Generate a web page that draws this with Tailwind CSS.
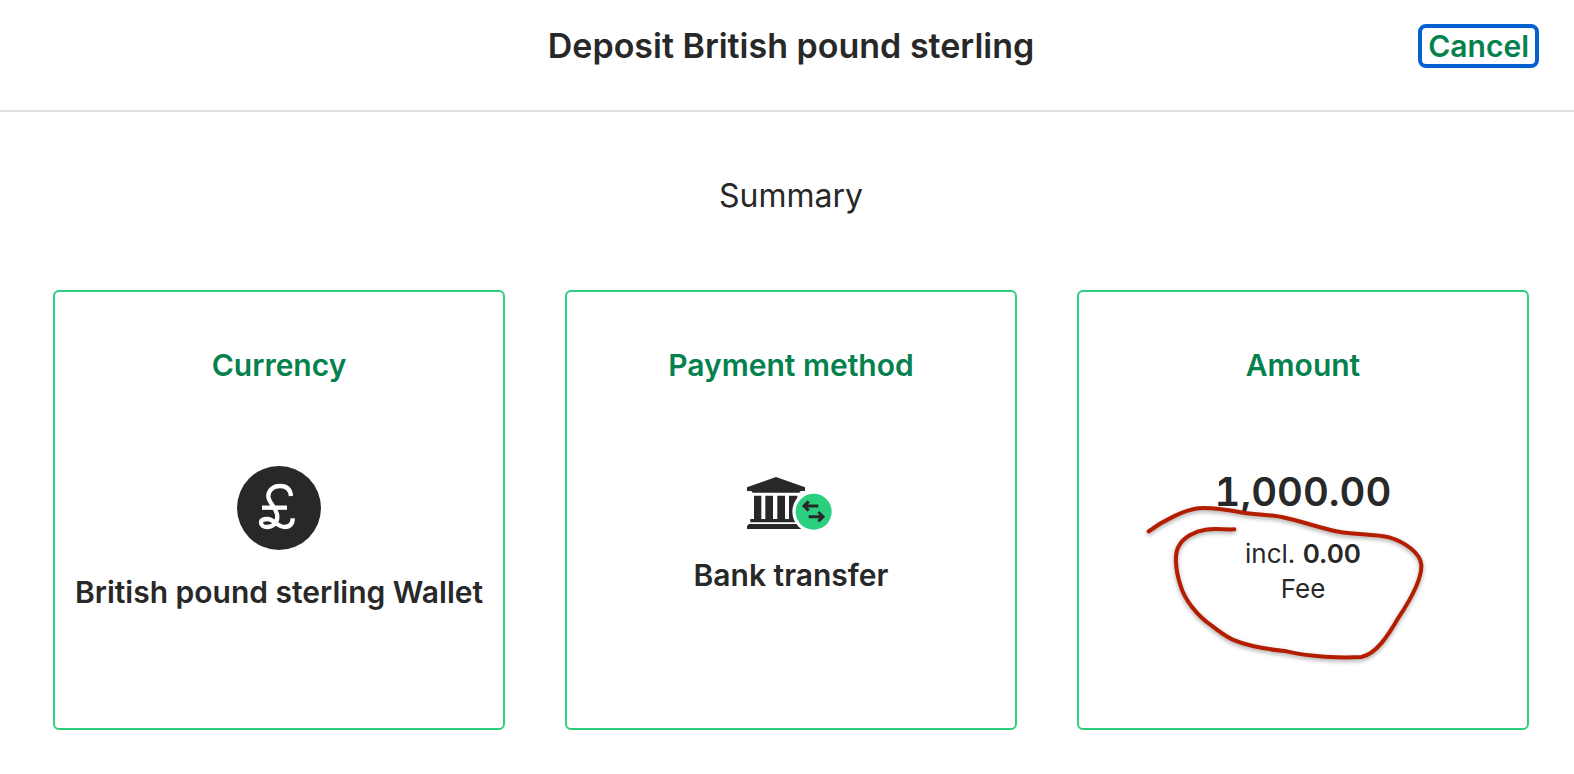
<!DOCTYPE html>
<html lang="en">
<head>
<meta charset="utf-8">
<meta name="viewport" content="width=device-width, initial-scale=1">
<title>Deposit British pound sterling</title>
<script src="https://cdn.jsdelivr.net/npm/@tailwindcss/browser@4"></script>
</head>
<body class="min-h-screen bg-white font-['Inter',sans-serif] text-[#282828]">
<header class="grid grid-cols-[1fr_auto_1fr] items-center border-b-2 border-[#e1e1e1] pt-6 pr-[35px] pb-[42px] pl-[43px]">
  <h1 class="col-start-2 text-[34px] leading-[44px] font-semibold">Deposit British pound sterling</h1>
  <button type="button" class="h-11 justify-self-end rounded-lg border-4 border-[#0560d0] px-1.5 text-[30px] leading-9 font-semibold text-[#04814d]">Cancel</button>
</header>
<main class="pt-16 pr-[45px] pb-11 pl-[53px] text-center">
  <h2 class="text-[32px] leading-10">Summary</h2>
  <div class="mt-[74px] grid grid-cols-3 gap-[60px]">
    <section class="flex min-h-[440px] flex-col items-center rounded-md border-2 border-[#2ad080] pt-[53px]">
      <h3 class="text-[30px] leading-10 font-semibold text-[#04814d]">Currency</h3>
      <svg class="mt-[81px] size-[84px]" viewBox="51 47 252 252" aria-hidden="true">
        <circle cx="177" cy="173" r="126" fill="#282828"/>
        <g fill="none" stroke="#fff" stroke-width="13">
          <path stroke-linejoin="round" d="M213 137C211 116 198 107 181 107C159 107 145 120 145 138C145 158 172 174 172 199C172 220 157 230 142 230C130 230 123 224 123 217C123 210 131 206 142 206C162 206 172 230 194 230C211 230 218 221 218 204"/>
          <path d="M126 172H201"/>
        </g>
      </svg>
      <p class="mt-[22px] text-[30px] leading-10 font-semibold whitespace-nowrap">British pound sterling Wallet</p>
    </section>
    <section class="flex min-h-[440px] flex-col items-center rounded-md border-2 border-[#2ad080] pt-[53px]">
      <h3 class="text-[30px] leading-10 font-semibold text-[#04814d]">Payment method</h3>
      <svg class="mt-[92px] h-[54px] w-[88px]" viewBox="51 51 264 162" aria-hidden="true">
        <g fill="#282828">
          <path d="M51 82L138 51L225 82V93H212L208 98H68L64 93H51Z"/>
          <path d="M72 107H94V177H106V107H129V177H142V107H165V177H177V107H202V177H213V187H61V177H72Z"/>
          <path d="M57 192H219L225 198V207H51V198Z"/>
        </g>
        <circle cx="251" cy="155" r="64" fill="#fff"/>
        <circle cx="251" cy="155" r="54" fill="#2ad080"/>
        <path d="M265 138H223M236 124L222 138L236 152M236 170H278M265 156L279 170L265 184" fill="none" stroke="#282828" stroke-width="9"/>
      </svg>
      <p class="mt-6 text-[30px] leading-10 font-semibold">Bank transfer</p>
    </section>
    <section class="relative flex min-h-[440px] flex-col items-center rounded-md border-2 border-[#2ad080] pt-[53px]">
      <h3 class="text-[30px] leading-10 font-semibold text-[#04814d]">Amount</h3>
      <p class="mt-[83px] text-[40px] leading-[48px] font-semibold tabular-nums">1,000.00</p>
      <p class="mt-5 text-[26px] leading-[35px]">incl. <strong class="font-semibold">0.00</strong><br>Fee</p>
      <svg class="pointer-events-none absolute top-[158px] left-1/2 ml-[-173px] h-[240px] w-[320px] drop-shadow-[0_2px_2px_rgba(0,0,0,0.35)]" viewBox="0 0 960 720" aria-hidden="true">
        <path d="M56 244C100 211 163 180 205 175C250 171 310 183 340 188C385 195 419 194 455 201C515 213 580 238 635 247C685 254 740 252 778 262C825 276 872 310 874 345C876 390 842 448 806 502C775 556 738 613 694 621C635 625 535 620 470 604C420 599 361 592 308 569C285 558 264 542 245 527C202 498 164 450 151 405C136 358 133 310 146 289C160 261 197 243 226 239C255 235 282 239 313 238" fill="none" stroke="#b51d00" stroke-width="12" stroke-linecap="round" stroke-linejoin="round"/>
      </svg>
    </section>
  </div>
</main>
</body>
</html>
